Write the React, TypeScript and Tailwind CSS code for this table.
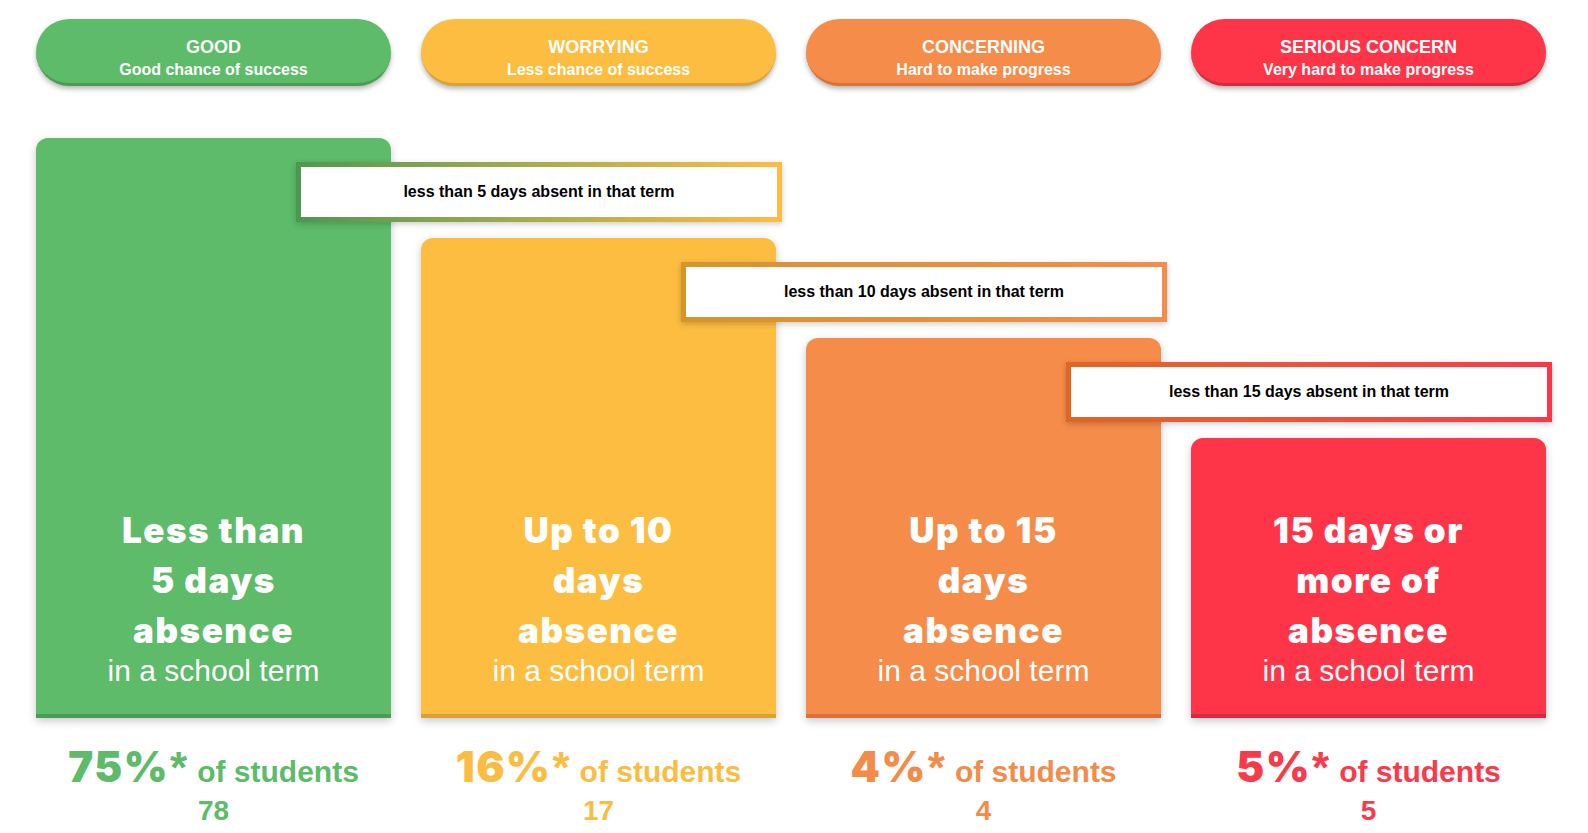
import React from "react";

type Col = {
  title: string;
  sub: string;
  pill: string;
  bar: string;
  text: string;
  lines: string[];
  pct: string;
  n: string;
  box?: string;
  grad?: string;
};

const cols: Col[] = [
  {
    title: "GOOD",
    sub: "Good chance of success",
    pill: "bg-[#5dbb69] border-[#4c9a56]",
    bar: "h-[580px] bg-[#5dbb69] border-[#4c9a56]",
    text: "text-[#5dbb69]",
    lines: ["Less than", "5 days", "absence"],
    pct: "75%",
    n: "78",
    box: "less than 5 days absent in that term",
    grad: "bg-gradient-to-r from-[#4a9752] to-[#fcbd41]",
  },
  {
    title: "WORRYING",
    sub: "Less chance of success",
    pill: "bg-[#fcbd41] border-[#d9a235]",
    bar: "h-[480px] bg-[#fcbd41] border-[#d9a235]",
    text: "text-[#fbbd41]",
    lines: ["Up to 10", "days", "absence"],
    pct: "16%",
    n: "17",
    box: "less than 10 days absent in that term",
    grad: "bg-gradient-to-r from-[#d4952b] to-[#f58c4a]",
  },
  {
    title: "CONCERNING",
    sub: "Hard to make progress",
    pill: "bg-[#f58c4a] border-[#d8723b]",
    bar: "h-[380px] bg-[#f58c4a] border-[#d8723b]",
    text: "text-[#f38b49]",
    lines: ["Up to 15", "days", "absence"],
    pct: "4%",
    n: "4",
    box: "less than 15 days absent in that term",
    grad: "bg-gradient-to-r from-[#de6626] to-[#fe3548]",
  },
  {
    title: "SERIOUS CONCERN",
    sub: "Very hard to make progress",
    pill: "bg-[#fe3548] border-[#d52b3c]",
    bar: "h-[280px] bg-[#fe3548] border-[#d52b3c]",
    text: "text-[#f93a4b]",
    lines: ["15 days or", "more of", "absence"],
    pct: "5%",
    n: "5",
  },
];

export default function App() {
  return (
    <div className="w-[1588px] h-[833px] bg-white overflow-hidden font-['Liberation_Sans',Arial,sans-serif]">
      {/* pills */}
      <div className="flex gap-[30px] pl-[36px] pt-[19px]">
        {cols.map((c) => (
          <div
            key={c.title}
            className={`w-[355px] h-[67px] rounded-full border-b-[3px] shadow-[0_3px_5px_rgba(0,0,0,0.28)] pt-[16px] text-center text-white font-bold ${c.pill}`}
          >
            <div className="text-[18px] leading-[24px]">{c.title}</div>
            <div className="text-[16px] leading-[22px]">{c.sub}</div>
          </div>
        ))}
      </div>

      {/* bars */}
      <div className="flex items-end gap-[30px] pl-[36px] mt-[52px] h-[580px]">
        {cols.map((c) => (
          <div key={c.title} className="relative w-[355px]">
            <div
              className={`w-full rounded-t-[12px] border-b-4 shadow-[0_3px_8px_rgba(0,0,0,0.22)] flex flex-col justify-end items-center pb-[25px] text-white ${c.bar}`}
            >
              {c.lines.map((l) => (
                <div
                  key={l}
                  className="font-['Inter',sans-serif] font-black text-[35px] leading-[50px] tracking-[1.5px]"
                >
                  {l}
                </div>
              ))}
              <div className="-mt-[2px] text-[30px] leading-[36px]">in a school term</div>
            </div>
            {c.box && (
              <div
                className={`absolute z-10 left-[260px] top-[24px] w-[486px] h-[60px] p-[5px] shadow-[0_2px_6px_rgba(0,0,0,0.2)] ${c.grad}`}
              >
                <div className="w-full h-full bg-white flex items-center justify-center text-[16px] font-bold text-black">
                  {c.box}
                </div>
              </div>
            )}
          </div>
        ))}
      </div>

      {/* stats */}
      <div className="flex gap-[30px] pl-[36px] pt-[25px]">
        {cols.map((c) => (
          <div key={c.title} className={`w-[355px] flex flex-col items-center font-bold ${c.text}`}>
            <div className="flex items-baseline h-[48px]">
              <span className="font-['Inter',sans-serif] font-black text-[42px] leading-[48px] tracking-[1.5px]">
                {c.pct}
              </span>
              <span className="text-[44px] leading-[48px] ml-[1px] relative top-[1px]">*</span>
              <span className="text-[30px] leading-[48px] ml-[10px]">of students</span>
            </div>
            <div className="mt-[4px] text-[28px] leading-[32px]">{c.n}</div>
          </div>
        ))}
      </div>
    </div>
  );
}
